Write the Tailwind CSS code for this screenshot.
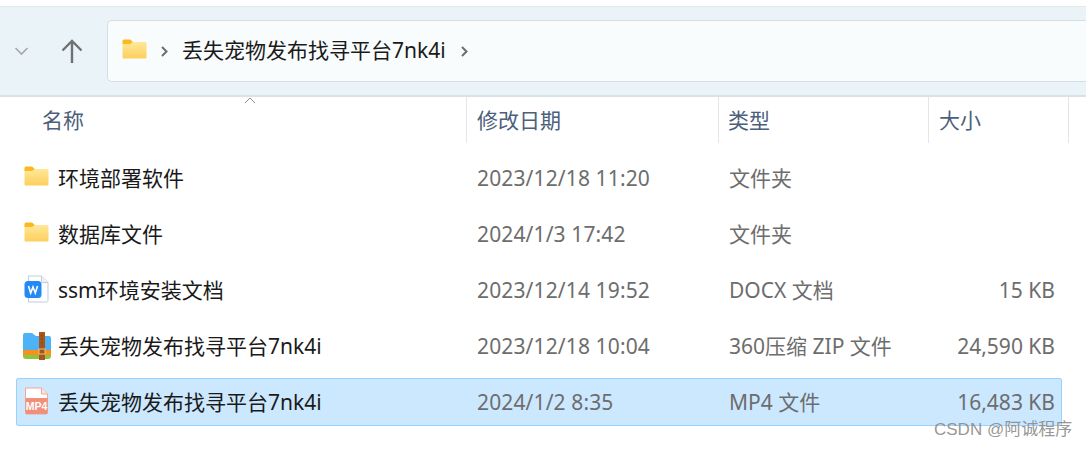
<!DOCTYPE html>
<html lang="zh-CN">
<head>
  <meta charset="UTF-8">
  <title>丢失宠物发布找寻平台7nk4i</title>
  <script src="https://cdn.jsdelivr.net/npm/@tailwindcss/browser@4"></script>
</head>
<body class="bg-white font-['Noto_Sans','Noto_Sans_CJK_SC',sans-serif] text-[21px] overflow-hidden">
  <div class="relative w-[1086px] h-[449px] overflow-hidden">
    <svg class="absolute w-0 h-0">
      <defs>
        <linearGradient id="fg" x1="0" y1="0" x2="0" y2="1"><stop offset="0" stop-color="#fee89a"/><stop offset="1" stop-color="#fdcf5c"/></linearGradient>
        <symbol id="folder" viewBox="0 0 25 20">
          <path d="M0.500 3.500h10l1-.500h12a1 1 0 0 1 1 1v14.500a1 1 0 0 1-1 1h-22a1 1 0 0 1-1-1z" fill="url(#fg)"/>
          <path d="M0.500 2a1.500 1.500 0 0 1 1.500-1.500h6l3 2.500-3 2h-7.500z" fill="#fbb81f"/>
        </symbol>
      </defs>
    </svg>

    <!-- toolbar -->
    <div class="mt-[6px] h-[91px] bg-[#eaf3f7] border-t border-[#e3e8ea] border-b-2 border-b-[#dbe2e6] flex items-center">
      <svg class="ml-[14px] w-[15px] h-[10px]" viewBox="0 0 15 10" fill="none" stroke="#a3a8ab" stroke-width="1.6"><path d="M1.500 2l6 6 6-6"/></svg>
      <svg class="ml-[32px] w-[22px] h-[24px]" viewBox="0 0 22 24" fill="none" stroke="#6f7275" stroke-width="2.400"><path d="M11 24V2M1.500 11.500L11 2l9.500 9.500"/></svg>
      <div class="ml-[24px] flex-1 h-[62px] bg-[#f8fcfd] border border-[#d9dde0] border-r-0 rounded-l-[5px] flex items-center">
        <svg class="ml-[14px] mb-[4px] w-[25px] h-[20px]" viewBox="0 0 25 20"><use href="#folder"/></svg>
        <svg class="ml-[14px] w-[7px] h-[11px]" viewBox="0 0 7 11" fill="none" stroke="#6b6e70" stroke-width="2"><path d="M1 1l4.500 4.500L1 10"/></svg>
        <span class="ml-[14px] text-[#1a1a1a]">丢失宠物发布找寻平台7nk4i</span>
        <svg class="ml-[15px] w-[7px] h-[11px]" viewBox="0 0 7 11" fill="none" stroke="#6b6e70" stroke-width="2"><path d="M1 1l4.500 4.500L1 10"/></svg>
      </div>
    </div>

    <!-- column headers -->
    <div class="h-[46px] grid grid-cols-[466px_252px_210px_140px_18px] text-[#4c607a]">
      <div class="pl-[42px] pt-[8px]">名称</div>
      <div class="border-l border-[#e3e5e7] pl-[10px] pt-[8px]">修改日期</div>
      <div class="border-l border-[#e3e5e7] pl-[9px] pt-[8px]">类型</div>
      <div class="border-l border-[#e3e5e7] pl-[10px] pt-[8px]">大小</div>
      <div class="border-l border-[#e3e5e7]"></div>
    </div>
    <svg class="absolute left-[244px] top-[97px] w-[12px] h-[7px]" viewBox="0 0 12 7" fill="none" stroke="#8b8f92" stroke-width="1"><path d="M1 6l5-5 5 5"/></svg>

    <!-- file rows -->
    <div class="mt-[11px] flex flex-col gap-[8px] ml-[16px] w-[1046px] text-[#6d6d6d]">
      <div class="h-[48px] pt-[2px] grid grid-cols-[450px_252px_210px_134px] items-center border border-transparent">
        <div class="flex items-center text-[#1a1a1a]"><svg class="ml-[7px] mr-[9px] mb-[6px] w-[25px] h-[20px]" viewBox="0 0 25 20"><use href="#folder"/></svg>环境部署软件</div>
        <div class="pl-[10px] tracking-[0.13px]">2023/12/18 11:20</div><div class="pl-[10px]">文件夹</div><div class="text-right pr-[8px]"></div>
      </div>
      <div class="h-[48px] pt-[2px] grid grid-cols-[450px_252px_210px_134px] items-center border border-transparent">
        <div class="flex items-center text-[#1a1a1a]"><svg class="ml-[7px] mr-[9px] mb-[6px] w-[25px] h-[20px]" viewBox="0 0 25 20"><use href="#folder"/></svg>数据库文件</div>
        <div class="pl-[10px] tracking-[0.13px]">2024/1/3 17:42</div><div class="pl-[10px]">文件夹</div><div class="text-right pr-[8px]"></div>
      </div>
      <div class="h-[48px] pt-[2px] grid grid-cols-[450px_252px_210px_134px] items-center border border-transparent">
        <div class="flex items-center text-[#1a1a1a]">
          <svg class="ml-[7px] mr-[9px] mb-[4px] w-[25px] h-[28px]" viewBox="0 0 25 28">
            <path d="M4.500 1h13l6.500 6.500v18a1.500 1.500 0 0 1-1.500 1.500h-18z" fill="#fdfeff" stroke="#c5cbd6"/>
            <path d="M17.500 1v6.500h6.500" fill="#eef1f5" stroke="#c5cbd6"/>
            <rect x="0.500" y="6" width="17" height="17" rx="3.500" fill="#2389f4"/>
            <path d="M4.500 11l2.200 7 2.300-6 2.300 6 2.200-7" fill="none" stroke="#fff" stroke-width="1.600"/>
          </svg>ssm环境安装文档</div>
        <div class="pl-[10px] tracking-[0.13px]">2023/12/14 19:52</div><div class="pl-[10px]">DOCX 文档</div><div class="text-right pr-[8px]">15 KB</div>
      </div>
      <div class="h-[48px] pt-[2px] grid grid-cols-[450px_252px_210px_134px] items-center border border-transparent">
        <div class="flex items-center text-[#1a1a1a]">
          <svg class="ml-[6px] mr-[7px] mb-[2px] w-[28px] h-[28px]" viewBox="0 0 28 28">
            <path d="M0 3a2 2 0 0 1 2-2h7l4 3h13a2 2 0 0 1 2 2v13H0z" fill="#4db2f6"/>
            <rect x="0" y="18" width="28" height="5" fill="#f6911e"/>
            <path d="M0 23h28v1a3 3 0 0 1-3 3H3a3 3 0 0 1-3-3z" fill="#8cc63f"/>
            <rect x="16" y="0" width="6" height="28" fill="#a5561d"/>
            <rect x="16" y="17" width="6" height="5" fill="none" stroke="#f2c078" stroke-width="1"/>
            <path d="M19 3v11" stroke="#7d3f12" stroke-width="1" stroke-dasharray="1.500 2"/>
          </svg>丢失宠物发布找寻平台7nk4i</div>
        <div class="pl-[10px] tracking-[0.13px]">2023/12/18 10:04</div><div class="pl-[10px]">360压缩 ZIP 文件</div><div class="text-right pr-[8px]">24,590 KB</div>
      </div>
      <div class="h-[48px] pt-[2px] grid grid-cols-[450px_252px_210px_134px] items-center bg-[#cce8ff] border border-[#99d1ff] rounded-[2px]">
        <div class="flex items-center text-[#1a1a1a]">
          <svg class="ml-[7px] mr-[9px] mb-[4px] w-[25px] h-[28px]" viewBox="0 0 25 28">
            <path d="M1.500 1h16l6 6v18.500a1.500 1.500 0 0 1-1.500 1.500H3a1.500 1.500 0 0 1-1.500-1.500z" fill="#fff" stroke="#f0a794"/>
            <rect x="1.500" y="11" width="22" height="16" fill="#f0907a"/>
            <path d="M17.500 1v6h6" fill="#fbe3dc" stroke="#f0a794"/>
            <text x="12.500" y="22.500" text-anchor="middle" font-size="10.500" font-weight="700" fill="#fff" font-family="Liberation Sans">MP4</text>
          </svg>丢失宠物发布找寻平台7nk4i</div>
        <div class="pl-[10px] tracking-[0.13px]">2024/1/2 8:35</div><div class="pl-[10px]">MP4 文件</div><div class="text-right pr-[8px]">16,483 KB</div>
      </div>
    </div>

    <!-- watermark -->
    <div class="absolute left-[934px] top-[420px] text-[17px] leading-[20px] text-[#8a8a8a]/90 font-['Liberation_Sans','Noto_Sans_CJK_SC',sans-serif]">CSDN @阿诚程序</div>
  </div>
</body>
</html>
